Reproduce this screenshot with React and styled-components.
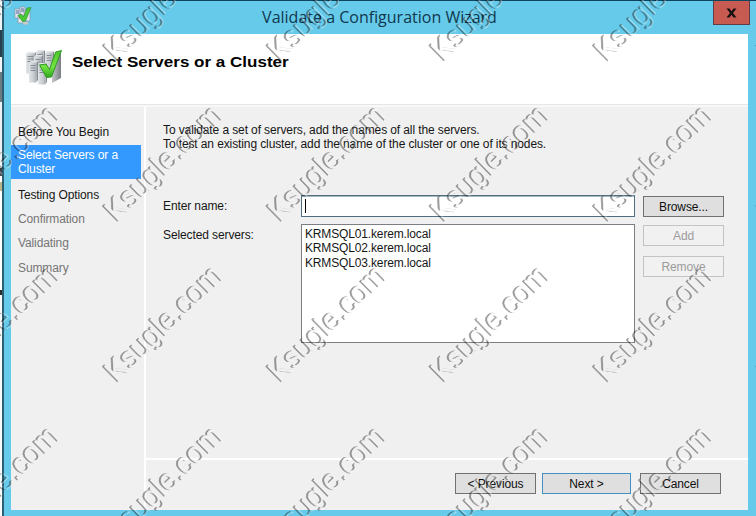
import React from "react";
import styled, { createGlobalStyle } from "styled-components";

const GlobalStyle = createGlobalStyle`
  *, *::before, *::after { box-sizing: border-box; }
  html, body { margin: 0; padding: 0; overflow: hidden; }
  body {
    font-family: "Liberation Sans", Arial, sans-serif;
    font-size: 12px;
    line-height: 14px;
    letter-spacing: -0.11px;
    color: #161616;
  }
`;

const Desktop = styled.div`
  position: relative;
  display: flex;
  width: 756px;
  height: 516px;
  overflow: hidden;
  background: #e9f0f1;
`;

const Backdrop = styled.div`
  display: flex;
  flex-direction: column;
  width: 2px;
`;

const BackdropBand = styled.div`
  height: ${(p) => p.$h}px;
  background: ${(p) => p.$color};
`;

const WizardWindow = styled.div`
  display: flex;
  flex-direction: column;
  width: 754px;
  height: 516px;
  padding: 0 8px 6px 7px;
  background: #66caea;
  border-top: 1px solid #0d4560;
  border-left: 2px solid #2b5f73;
`;

const TitleBar = styled.div`
  display: flex;
  justify-content: space-between;
  height: 33px;
  flex: none;
`;

const TitleIcon = styled.div`
  width: 30px;
  padding: 5px 0 0 3px;
`;

const WindowTitle = styled.div`
  padding: 4px 0 0 5px;
  font-family: "Open Sans", "Noto Sans", sans-serif;
  font-size: 16px;
  line-height: 24px;
  letter-spacing: 0;
  white-space: nowrap;
  color: #10384d;
`;

const CloseButton = styled.button`
  display: flex;
  align-items: center;
  justify-content: center;
  width: 37px;
  height: 24px;
  margin-right: -2px;
  padding: 0;
  background: #c75b52;
  border: 1px solid #5f3c47;
  border-top: 0;
`;

const Header = styled.header`
  display: flex;
  align-items: flex-start;
  height: 71px;
  flex: none;
  padding: 16px 0 0 14px;
  gap: 9px;
  background: #fff;
  border-bottom: 1px solid #e6e6e6;
`;

const Heading = styled.h1`
  margin: 3px 0 0;
  font-size: 15px;
  line-height: 18px;
  font-weight: bold;
  letter-spacing: 0;
  white-space: nowrap;
  transform: scaleX(1.135);
  transform-origin: left center;
  color: #000;
`;

const Body = styled.div`
  display: flex;
  flex: 1;
  border-top: 2px solid #f8f8f8;
  background: #f0f0f0;
`;

const Sidebar = styled.nav`
  display: flex;
  flex-direction: column;
  width: 135px;
  flex: none;
  padding-top: 13px;
  border-right: 2px solid #fff;
`;

const Step = styled.div`
  width: 130px;
  height: ${(p) => (p.$active ? 34 : 24.3)}px;
  margin-top: ${(p) => (p.$active ? 1 : 0)}px;
  margin-bottom: ${(p) => (p.$active ? 3.4 : 0)}px;
  padding: ${(p) => (p.$active ? 3 : 5)}px 0 0 7px;
  line-height: 14px;
  white-space: pre;
  color: ${(p) => (p.$active ? "#fff" : p.$muted ? "#757575" : "#161616")};
  background: ${(p) => (p.$active ? "#3399ff" : "transparent")};
`;

const Main = styled.main`
  display: flex;
  flex-direction: column;
  flex: 1;
  min-width: 0;
`;

const Page = styled.section`
  height: 351px;
  padding: 16px 0 0 17px;
`;

const Intro = styled.div`
  height: 72px;
`;

const Line = styled.div`
  height: 14.4px;
  line-height: 14.4px;
  white-space: nowrap;
`;

const ServerName = styled(Line)`
  letter-spacing: -0.15px;
`;

const Form = styled.div`
  display: grid;
  grid-template-columns: 130px 334px 81px;
  grid-template-rows: 22px 119px;
  gap: 7px 8px;
`;

const Label = styled.label`
  padding-top: ${(p) => p.$top}px;
  white-space: nowrap;
`;

const NameField = styled.div`
  padding: 3px 0 0 3px;
  background: #fff;
  border: 1px solid #4f6f80;
  box-shadow: inset 0 1px 0 #a9b8c0;
`;

const Caret = styled.div`
  width: 1px;
  height: 14px;
  background: #000;
`;

const ServerList = styled.div`
  padding: 2px 0 0 3px;
  background: #fff;
  border: 1px solid #7b7f83;
`;

const SideButtons = styled.div`
  display: flex;
  flex-direction: column;
  gap: 10px;
  padding-top: 1px;
`;

const Button = styled.button`
  width: ${(p) => p.$w || 81}px;
  height: 21px;
  padding: 0;
  font: 12px/14px "Liberation Sans", Arial, sans-serif;
  letter-spacing: -0.11px;
  white-space: pre;
  color: ${(p) => (p.disabled ? "#9c9c9c" : "#101010")};
  background: ${(p) => (p.disabled ? "#f1f1f1" : "#dfdfdf")};
  border: 1px solid ${(p) => (p.disabled ? "#c3c3c3" : p.$primary ? "#4391c4" : "#717171")};
`;

const BrowseCell = styled.div`
  padding-top: 1px;
`;

const Footer = styled.footer`
  display: flex;
  flex: 1;
  justify-content: flex-end;
  gap: 6px;
  padding: 13px 27px 0 0;
  border-top: 2px solid #fff;
`;

const CancelButton = styled(Button)`
  margin-left: 3px;
`;

const Overlay = styled.svg`
  position: absolute;
  left: 0;
  top: 0;
  pointer-events: none;
`;

const TOWERS = [
  [11, 0, 9],
  [20, 1, 9],
  [1, 2, 10],
  [9, 5, 9],
  [4, 11, 9],
  [13, 13, 9],
];

function Tower({ x, y, w }) {
  return (
    <g>
      <path d={`M${x} ${y + 1.5}l2-1.5h${w - 2}l-1.5 2z`} fill="#e3e6e8" />
      <path d={`M${x + w - 1.5} ${y + 2}l1.5-2v19l-1.5 2z`} fill="#858c92" />
      <rect x={x} y={y + 1.5} width={w - 1.5} height="20" fill="url(#tower)" />
      <path
        d={`M${x + 1.5} ${y + 4.5}h${w - 4}M${x + 1.5} ${y + 7}h${w - 4}M${x + 1.5} ${y + 9.5}h${w - 4}`}
        stroke="#828b94"
        strokeWidth="1"
      />
    </g>
  );
}

function ClusterIcon({ width, height }) {
  return (
    <svg width={width} height={height} viewBox="0 0 38 38" preserveAspectRatio="none">
      <defs>
        <linearGradient id="tower" x1="0" x2="1">
          <stop offset="0" stopColor="#e2e5e7" />
          <stop offset="0.6" stopColor="#c9cdd1" />
          <stop offset="1" stopColor="#a8aeb3" />
        </linearGradient>
        <linearGradient id="tick" x1="0" y1="0" x2="0" y2="1">
          <stop offset="0" stopColor="#4dc52f" />
          <stop offset="0.6" stopColor="#72e442" />
          <stop offset="1" stopColor="#2fa51f" />
        </linearGradient>
        <linearGradient id="slab" x1="0" x2="1">
          <stop offset="0" stopColor="#c4c8cb" />
          <stop offset="1" stopColor="#777d82" />
        </linearGradient>
      </defs>
      <path d="M27 8l9-5v25l-9 5z" fill="url(#slab)" />
      {TOWERS.map(([x, y, w]) => (
        <Tower key={`${x}-${y}`} x={x} y={y} w={w} />
      ))}
      <path
        d="M14.5 15l6.500-1 3.500 5.500L30.500 2l6-1.500C33 9 30 18 26.500 27l-5 .5z"
        fill="url(#tick)"
        stroke="#279318"
        strokeWidth="0.9"
      />
    </svg>
  );
}

function SmallClusterIcon() {
  return (
    <svg width="18" height="20" viewBox="0 0 18 20">
      <path d="M6 1h5v9H6zM1 3h5v9H1zM4 9h5v8H4zM10 4h6v11h-6z" fill="#e2e6ee" stroke="#8c98ab" strokeWidth="0.7" />
      <path d="M2 5h3M7 3h3M5 11h3M2 7h3M7 5h3" stroke="#4c6795" strokeWidth="1" />
      <path d="M9 16h5v2.500H9z" fill="#cfc9c1" />
      <path d="M4 9.500l3-1.500 2.500 3L13 2l4-.5L11.500 15l-3 .5z" fill="#4acb35" stroke="#2c8f2c" strokeWidth="0.6" />
    </svg>
  );
}

const MARK_COLUMNS = [-48, 115.5, 279, 442, 605.5, 769];
const MARK_ROWS = [62.5, 223, 383.5, 544];

function Watermark() {
  return (
    <Overlay width="756" height="516" viewBox="0 0 756 516">
      <defs>
        <filter id="emboss" filterUnits="userSpaceOnUse" x="-60" y="-60" width="880" height="640" colorInterpolationFilters="sRGB">
          <feOffset in="SourceAlpha" dx="2" dy="0" result="right" />
          <feComposite in="SourceAlpha" in2="right" operator="out" result="leftEdge" />
          <feOffset in="SourceAlpha" dx="-2" dy="0" result="left" />
          <feComposite in="SourceAlpha" in2="left" operator="out" result="rightEdge" />
          <feFlood floodColor="#000" floodOpacity="0.4" />
          <feComposite in2="leftEdge" operator="in" result="dark" />
          <feFlood floodColor="#fff" floodOpacity="0.35" />
          <feComposite in2="rightEdge" operator="in" result="light" />
          <feMerge result="edges">
            <feMergeNode in="light" />
            <feMergeNode in="dark" />
          </feMerge>
          <feGaussianBlur in="edges" stdDeviation="0.6" />
        </filter>
      </defs>
      <g
        filter="url(#emboss)"
        fontFamily="Liberation Sans, Arial, sans-serif"
        fontSize="31"
        letterSpacing="0"
        stroke="#000"
        strokeWidth="0.6"
      >
        {MARK_ROWS.map((y) =>
          MARK_COLUMNS.map((x) => (
            <text key={`${x}-${y}`} transform={`translate(${x} ${y}) rotate(-44.5)`} textLength="151" lengthAdjust="spacingAndGlyphs">
              Ksugle.com
            </text>
          ))
        )}
      </g>
    </Overlay>
  );
}

const BACKDROP = [
  [30, "#eef4f6"],
  [27, "#27404f"],
  [15, "#f2f4f5"],
  [30, "#6d7b82"],
  [66, "#eef1f2"],
  [8, "#39434a"],
  [6, "#fff"],
  [9, "#b9b58b"],
  [99, "#fff"],
  [5, "#26302c"],
  [221, "#f7fafa"],
];

const SERVERS = ["KRMSQL01.kerem.local", "KRMSQL02.kerem.local", "KRMSQL03.kerem.local"];

export default function App() {
  return (
    <Desktop>
      <GlobalStyle />
      <Backdrop>
        {BACKDROP.map(([h, color], i) => (
          <BackdropBand key={i} $h={h} $color={color} />
        ))}
      </Backdrop>
      <WizardWindow>
        <TitleBar>
          <TitleIcon>
            <SmallClusterIcon />
          </TitleIcon>
          <WindowTitle>Validate a Configuration Wizard</WindowTitle>
          <CloseButton aria-label="Close">
            <svg width="11" height="10" viewBox="0 0 11 10">
              <path d="M0.500 0.500h3L5.500 3.200 7.500 0.500h3L7 5l3.500 4.500h-3L5.500 6.800 3.500 9.500h-3L4 5z" fill="#161010" />
            </svg>
          </CloseButton>
        </TitleBar>
        <Header>
          <ClusterIcon width={38} height={38} />
          <Heading>Select Servers or a Cluster</Heading>
        </Header>
        <Body>
          <Sidebar>
            <Step>Before You Begin</Step>
            <Step $active>{"Select Servers or a\nCluster"}</Step>
            <Step>Testing Options</Step>
            <Step $muted>Confirmation</Step>
            <Step $muted>Validating</Step>
            <Step $muted>Summary</Step>
          </Sidebar>
          <Main>
            <Page>
              <Intro>
                <Line>To validate a set of servers, add the names of all the servers.</Line>
                <Line>To test an existing cluster, add the name of the cluster or one of its nodes.</Line>
              </Intro>
              <Form>
                <Label $top={4}>Enter name:</Label>
                <NameField>
                  <Caret />
                </NameField>
                <BrowseCell>
                  <Button>Browse...</Button>
                </BrowseCell>
                <Label $top={4}>Selected servers:</Label>
                <ServerList>
                  {SERVERS.map((s) => (
                    <ServerName key={s}>{s}</ServerName>
                  ))}
                </ServerList>
                <SideButtons>
                  <Button disabled>Add</Button>
                  <Button disabled>Remove</Button>
                </SideButtons>
              </Form>
            </Page>
            <Footer>
              <Button>{"< Previous"}</Button>
              <Button $w={89} $primary>{"Next >"}</Button>
              <CancelButton>Cancel</CancelButton>
            </Footer>
          </Main>
        </Body>
      </WizardWindow>
      <Watermark />
    </Desktop>
  );
}
